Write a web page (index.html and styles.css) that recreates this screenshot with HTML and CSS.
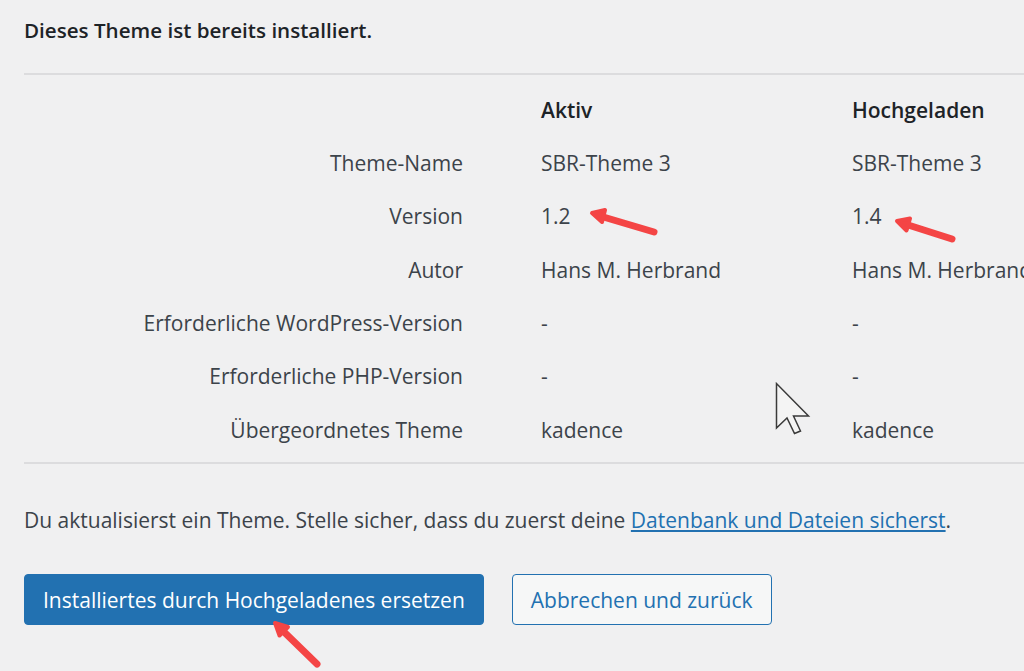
FILE: index.html
```html
<!DOCTYPE html>
<html lang="de">
<head>
    <meta charset="UTF-8">
    <title>Theme hochladen</title>
    <link rel="stylesheet" href="styles.css">
</head>
<body>
    <div class="wrap">
        <p class="notice">Dieses Theme ist bereits installiert.</p>

        <div class="compare">
            <div class="cell label"></div>
            <div class="cell head">Aktiv</div>
            <div class="cell head">Hochgeladen</div>

            <div class="cell label">Theme-Name</div>
            <div class="cell">SBR-Theme 3</div>
            <div class="cell">SBR-Theme 3</div>

            <div class="cell label">Version</div>
            <div class="cell">1.2</div>
            <div class="cell">1.4</div>

            <div class="cell label">Autor</div>
            <div class="cell">Hans M. Herbrand</div>
            <div class="cell">Hans M. Herbrand</div>

            <div class="cell label">Erforderliche WordPress-Version</div>
            <div class="cell">-</div>
            <div class="cell">-</div>

            <div class="cell label">Erforderliche PHP-Version</div>
            <div class="cell">-</div>
            <div class="cell">-</div>

            <div class="cell label">Übergeordnetes Theme</div>
            <div class="cell">kadence</div>
            <div class="cell">kadence</div>
        </div>

        <p class="hint">Du aktualisierst ein Theme. Stelle sicher, dass du zuerst deine <a href="#">Datenbank und Dateien sicherst</a>.</p>

        <div class="actions">
            <a href="#" class="button button-primary">Installiertes durch Hochgeladenes ersetzen</a>
            <a href="#" class="button">Abbrechen und zurück</a>
        </div>
    </div>

    <!-- annotations drawn over the screenshot -->
    <svg class="overlay" width="1024" height="671" viewBox="0 0 1024 671">
        <g stroke="#f44545" fill="#f44545" stroke-linecap="round" stroke-linejoin="round">
            <line x1="654" y1="232" x2="600" y2="216" stroke-width="7"/>
            <polygon points="592,213 605,210 602,222" stroke-width="4"/>
            <line x1="952" y1="239" x2="905" y2="224" stroke-width="7"/>
            <polygon points="897,221 910,218.5 906.5,230.5" stroke-width="4"/>
            <line x1="317" y1="664" x2="281" y2="629" stroke-width="7"/>
            <polygon points="275,623 288,627 279.5,635.5" stroke-width="4"/>
        </g>
        <path d="M776.5,383.5 L776.5,428 L787,418 L794.5,433.5 L800.5,431 L793.5,416 L808.5,416 Z" fill="#f4f4f4" stroke="#3a3a3a" stroke-width="1.5" stroke-linejoin="miter"/>
    </svg>
</body>
</html>
```

FILE: styles.css
```css
/* General */
html, body {
    margin: 0;
    padding: 0;
    height: 671px;
    overflow: hidden;
}

body {
    background-color: #f0f0f1;
    color: #3c434a;
    font-family: 'Open Sans', 'Noto Sans', sans-serif;
    font-size: 21px;
    position: relative;
}

.wrap {
    padding-left: 24px;
    width: 1000px;
}

.notice {
    margin: 0;
    padding-top: 16px;
    height: 73px;
    box-sizing: border-box;
    font-size: 20.6px;
    font-weight: 600;
    color: #1d2327;
    white-space: nowrap;
}

/* Comparison table */
.compare {
    display: grid;
    grid-template-columns: 439px 233px 250px;
    grid-auto-rows: 53.33px;
    column-gap: 78px;
    border-top: 2px solid #dcdcde;
    border-bottom: 2px solid #dcdcde;
    padding-top: 8px;
    padding-bottom: 6px;
    width: 1078px;
}

.cell {
    display: flex;
    align-items: center;
    white-space: nowrap;
}

.cell.label {
    justify-content: flex-end;
}

.cell.head {
    font-weight: 600;
    color: #1d2327;
}

.hint {
    margin: 0;
    padding-top: 42px;
    white-space: nowrap;
}

.hint a {
    color: #2271b1;
    text-decoration: underline;
}

/* Buttons */
.actions {
    display: flex;
    gap: 28px;
    margin-top: 40px;
}

.button {
    display: flex;
    align-items: center;
    box-sizing: border-box;
    height: 51px;
    padding: 0 18px;
    border: 1.5px solid #2271b1;
    border-radius: 4px;
    background-color: #f6f7f7;
    color: #2271b1;
    text-decoration: none;
    white-space: nowrap;
}

.button-primary {
    background-color: #2271b1;
    color: #fff;
}

.overlay {
    position: absolute;
    top: 0;
    left: 0;
    pointer-events: none;
}
```
